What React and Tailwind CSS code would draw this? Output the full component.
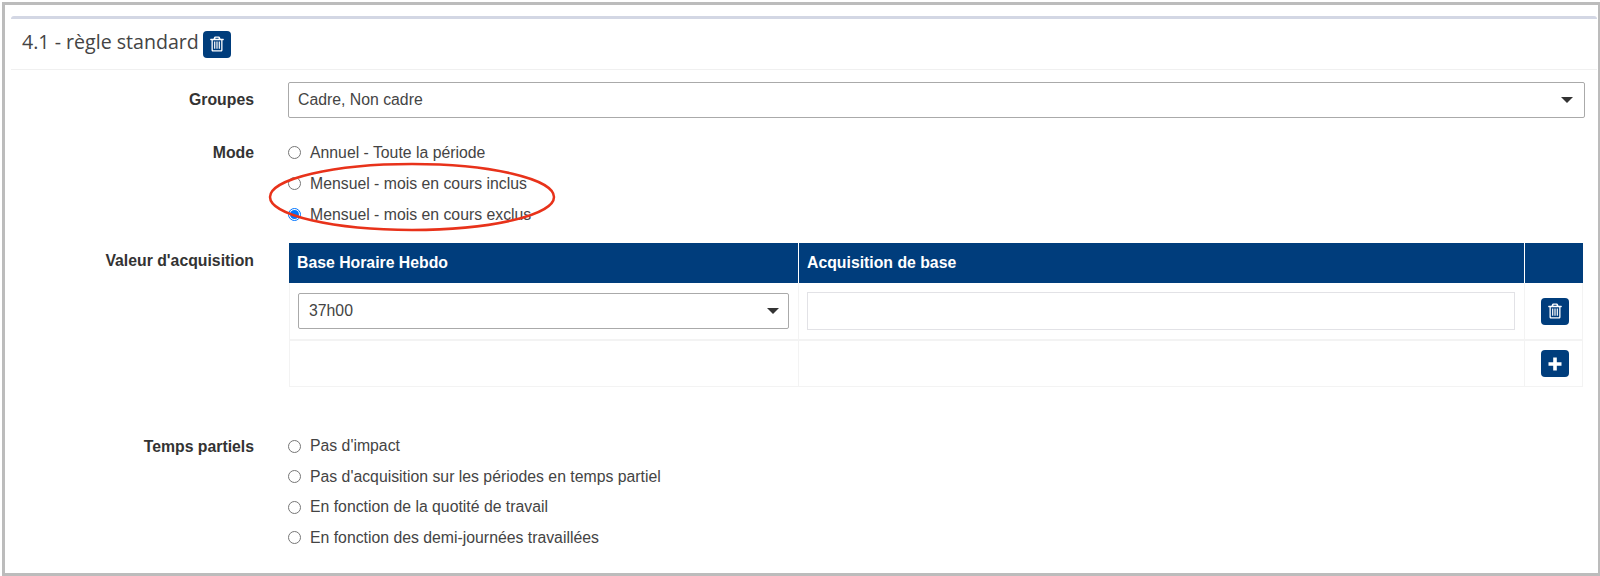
const Trash = ({ className }) => (
  <svg viewBox="0 0 14 16" className={className} aria-hidden="true">
    <path fill="#fff" fillRule="evenodd" d="M5.200.6h3.600c.6 0 1 .3 1.200.8l.5 1.300h2.800c.3 0 .5.2.5.5v.6c0 .3-.2.5-.5.5h-.8v9.600c0 1-.7 1.600-1.500 1.600H3c-.8 0-1.500-.6-1.500-1.600V4.300h-.8c-.3 0-.5-.2-.5-.5v-.6c0-.3.2-.5.5-.5h2.800l.5-1.300c.2-.5.6-.8 1.200-.8zM5.300 2.700h3.400L8.400 1.800H5.600zM2.800 4.300v9.500c0 .3.1.5.3.5h7.800c.2 0 .3-.2.3-.5V4.300z" />
    <path fill="#fff" d="M4.100 5.600h1.200v7.200H4.100zM6.400 5.600h1.200v7.200H6.400zM8.700 5.600h1.200v7.200H8.700z" />
  </svg>
);

const Plus = ({ className }) => (
  <svg viewBox="0 0 14 14" className={className} aria-hidden="true">
    <path fill="#fff" d="M5.200 0.500h3.600v4.700h4.700v3.600H8.800v4.700H5.200V8.800H.5V5.200h4.700z" />
  </svg>
);

const IconBtn = ({ children }) => (
  <span className="flex h-[27px] w-[28px] items-center justify-center rounded-[4px] bg-[#003d7c]">{children}</span>
);

const Caret = () => <span className="h-0 w-0 border-x-[6px] border-t-[6px] border-x-transparent border-t-[#333]" />;

const Radio = ({ label, checked, tall }) => (
  <label className={`flex items-center gap-[9px] text-[15.8px] text-[#444] ${tall ? "h-[31px]" : "h-[30.5px]"}`}>
    <span className={`flex h-[13px] w-[13px] items-center justify-center rounded-full border bg-white ${checked ? "border-[#0075ff]" : "border-[#767676]"}`}>
      {checked && <span className="h-[9px] w-[9px] rounded-full bg-[#0075ff]" />}
    </span>
    {label}
  </label>
);

const Label = ({ children, className = "" }) => (
  <div className={`w-[243px] shrink-0 text-right text-[15.8px] font-bold text-[#333] ${className}`}>{children}</div>
);

export default function App() {
  return (
    <div className="h-[576px] w-[1600px] overflow-hidden bg-white pl-[2px] pt-[2px] font-['Liberation_Sans',Arial,sans-serif]">
      <div className="relative h-full border-y-[3px] border-l-[3px] border-r-[2px] border-[#bcbcbc] bg-white pl-[6px] pr-[1px] pt-[11px]">
        <div className="rounded-t-[3px] border-t-[3px] border-[#d3d7e4]">
          <div className="flex h-[51px] items-center gap-[4px] border-b border-[#f0f0f0] pl-[11px] font-['Open_Sans',sans-serif] text-[19.6px] text-[#444]">
            <span className="pb-[5px]">4.1 - règle standard</span>
            <IconBtn><Trash className="h-[16px] w-[14px]" /></IconBtn>
          </div>

          <div className="flex flex-col pt-[12px]">
            <div className="flex items-center gap-[34px]">
              <Label>Groupes</Label>
              <div className="flex h-[36px] w-[1297px] items-center justify-between rounded-[2px] border border-[#aaa] pl-[9px] pr-[11px] text-[15.8px] text-[#444]">
                <span>Cadre, Non cadre</span>
                <Caret />
              </div>
            </div>

            <div className="mt-[19px] flex gap-[34px]">
              <Label className="pt-[4px]">Mode</Label>
              <div className="flex flex-col">
                <Radio tall label="Annuel - Toute la période" />
                <Radio tall label="Mensuel - mois en cours inclus" />
                <Radio tall label="Mensuel - mois en cours exclus" checked />
              </div>
            </div>

            <div className="mt-[13px] flex gap-[35px]">
              <Label className="pt-[6px]">Valeur d'acquisition</Label>
              <div className="grid w-[1294px] grid-cols-[510px_1fr_58px] grid-rows-[40px_58px_46px] text-[15.8px] text-[#444]">
                <div className="flex items-center border-r border-white bg-[#003d7c] pl-[8px] font-bold text-white">Base Horaire Hebdo</div>
                <div className="flex items-center border-r border-white bg-[#003d7c] pl-[8px] font-bold text-white">Acquisition de base</div>
                <div className="bg-[#003d7c]" />

                <div className="flex items-center border-x border-b-2 border-[#f3f3f3] pl-[8px] pr-[9px]">
                  <div className="flex h-[36px] w-full items-center justify-between rounded-[2px] border border-[#aaa] pl-[10px] pr-[9px]">
                    <span>37h00</span>
                    <Caret />
                  </div>
                </div>
                <div className="flex items-center border-r border-b-2 border-[#f3f3f3] pl-[8px] pr-[9px]">
                  <div className="h-[38px] w-full border border-[#e2e2e6]" />
                </div>
                <div className="flex items-center justify-center border-r border-b-2 border-[#f3f3f3] pl-[2px]"><IconBtn><Trash className="h-[16px] w-[14px]" /></IconBtn></div>

                <div className="border-x border-b border-[#f3f3f3]" />
                <div className="border-r border-b border-[#f3f3f3]" />
                <div className="flex items-center justify-center border-r border-b border-[#f3f3f3] pl-[2px]"><IconBtn><Plus className="h-[14px] w-[14px]" /></IconBtn></div>
              </div>
            </div>

            <div className="mt-[44px] flex gap-[34px]">
              <Label className="pt-[4px]">Temps partiels</Label>
              <div className="flex flex-col">
                <Radio label="Pas d'impact" />
                <Radio label="Pas d'acquisition sur les périodes en temps partiel" />
                <Radio label="En fonction de la quotité de travail" />
                <Radio label="En fonction des demi-journées travaillées" />
              </div>
            </div>
          </div>
        </div>

        <svg className="pointer-events-none absolute left-[262px] top-[155px]" width="290" height="76" viewBox="0 0 290 76" fill="none" aria-hidden="true">
          <ellipse cx="145" cy="37" rx="142" ry="33" stroke="#e8321a" strokeWidth="2.5" />
        </svg>
      </div>
    </div>
  );
}
